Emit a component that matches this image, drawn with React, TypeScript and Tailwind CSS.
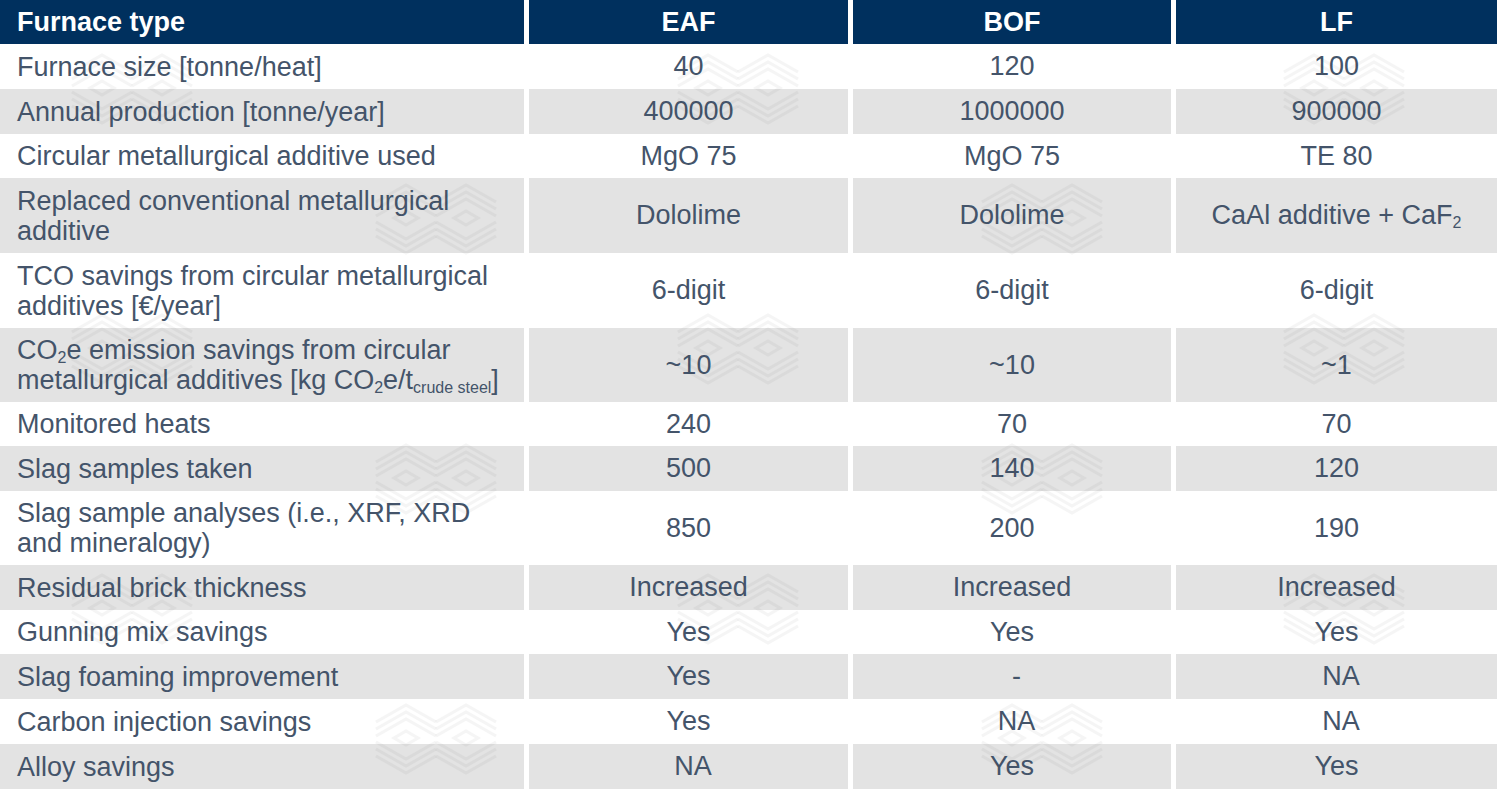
import type { ReactNode } from "react";

// furnace comparison table, slide style

type Row = {
  label: ReactNode;
  cells: ReactNode[];
  h: string;
  shift?: number[];
};

const rows: Row[] = [
  { label: "Furnace size [tonne/heat]", cells: ["40", "120", "100"], h: "h-[45px]" },
  { label: "Annual production [tonne/year]", cells: ["400000", "1000000", "900000"], h: "h-[45px]" },
  { label: "Circular metallurgical additive used", cells: ["MgO 75", "MgO 75", "TE 80"], h: "h-[44px]" },
  {
    label: (
      <>
        Replaced conventional metallurgical
        <br />
        additive
      </>
    ),
    cells: [
      "Dololime",
      "Dololime",
      <>
        CaAl additive + CaF<sub className="text-[16px]">2</sub>
      </>,
    ],
    h: "h-[75px]",
  },
  {
    label: (
      <>
        TCO savings from circular metallurgical
        <br />
        additives [€/year]
      </>
    ),
    cells: ["6-digit", "6-digit", "6-digit"],
    h: "h-[75px]",
  },
  {
    label: (
      <>
        CO<sub className="text-[16px]">2</sub>e emission savings from circular
        <br />
        metallurgical additives [kg CO<sub className="text-[16px]">2</sub>e/t
        <sub className="text-[16px]">crude steel</sub>]
      </>
    ),
    cells: ["~10", "~10", "~1"],
    h: "h-[74px]",
  },
  { label: "Monitored heats", cells: ["240", "70", "70"], h: "h-[44px]" },
  { label: "Slag samples taken", cells: ["500", "140", "120"], h: "h-[45px]" },
  {
    label: (
      <>
        Slag sample analyses (i.e., XRF, XRD
        <br />
        and mineralogy)
      </>
    ),
    cells: ["850", "200", "190"],
    h: "h-[74px]",
  },
  { label: "Residual brick thickness", cells: ["Increased", "Increased", "Increased"], h: "h-[45px]" },
  { label: "Gunning mix savings", cells: ["Yes", "Yes", "Yes"], h: "h-[44px]" },
  { label: "Slag foaming improvement", cells: ["Yes", "-", "NA"], h: "h-[45px]", shift: [2, 3] },
  { label: "Carbon injection savings", cells: ["Yes", "NA", "NA"], h: "h-[45px]", shift: [2, 3] },
  { label: "Alloy savings", cells: ["NA", "Yes", "Yes"], h: "h-[45px]", shift: [1] },
];

function Watermark() {
  const tile = (cx: number) => (
    <g key={cx}>
      {[0, 7, 14].map((k) => (
        <polyline key={"t" + k} points={`${cx - 30},${19 + k} ${cx},${2 + k} ${cx + 30},${19 + k}`} />
      ))}
      {[0, 7, 14].map((k) => (
        <polyline key={"b" + k} points={`${cx - 30},${53 - k} ${cx},${70 - k} ${cx + 30},${53 - k}`} />
      ))}
      <polygon points={`${cx},${28} ${cx + 12},${35} ${cx},${42} ${cx - 12},${35}`} />
    </g>
  );
  const pair = (
    <g fill="none" stroke="#000" strokeOpacity="0.04" strokeWidth="3">
      {tile(30)}
      {tile(90)}
    </g>
  );
  return (
    <svg className="pointer-events-none absolute inset-0" width="1500" height="789">
      <defs>
        <pattern id="wm" width="606" height="260" patternUnits="userSpaceOnUse">
          <g transform="translate(72,53)">{pair}</g>
          <g transform="translate(376,183)">{pair}</g>
        </pattern>
      </defs>
      <rect width="1500" height="789" fill="url(#wm)" />
    </svg>
  );
}

export default function App() {
  return (
    <div
      className="relative h-[789px] w-[1500px] overflow-hidden bg-white text-[27px] text-[#44546a]"
      style={{ fontFamily: '"Liberation Sans", Arial, sans-serif' }}
    >
      <div className="grid grid-cols-[524px_319px_318px_321px] gap-x-[5px]">
        <div className="flex h-[44px] items-center bg-[#00305e] pl-[17px] font-bold text-white">Furnace type</div>
        <div className="flex h-[44px] items-center justify-center bg-[#00305e] font-bold text-white">EAF</div>
        <div className="flex h-[44px] items-center justify-center bg-[#00305e] font-bold text-white">BOF</div>
        <div className="flex h-[44px] items-center justify-center bg-[#00305e] font-bold text-white">LF</div>

        {rows.map((r, i) => {
          const bg = i % 2 === 1 ? "bg-[#e3e3e3]" : "bg-white";
          return (
            <div key={i} className="contents">
              <div className={`flex items-center pl-[17px] leading-[30px] ${r.h} ${bg}`}>
                <div>{r.label}</div>
              </div>
              {r.cells.map((c, j) => (
                <div
                  key={j}
                  className={`flex items-center justify-center ${r.h} ${bg} ${
                    r.shift?.includes(j + 1) ? "pl-[9px]" : ""
                  }`}
                >
                  <div>{c}</div>
                </div>
              ))}
            </div>
          );
        })}
      </div>
      <Watermark />
    </div>
  );
}
